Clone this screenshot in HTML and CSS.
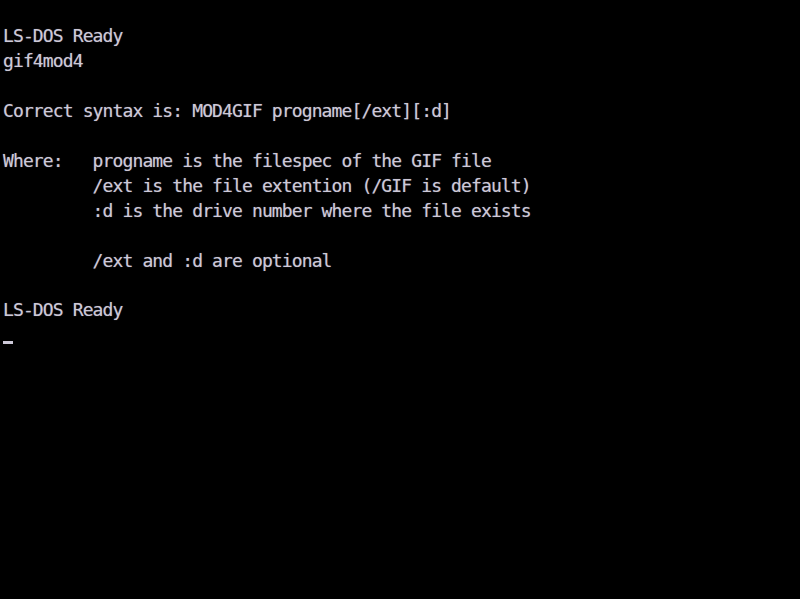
FILE: index.html
```html
<!DOCTYPE html>
<html>
<head>
<meta charset="utf-8">
<link rel="stylesheet" href="styles.css">
</head>
<body>
<main class="screen">
<pre class="term">LS-DOS Ready
gif4mod4

Correct syntax is: MOD4GIF progname[/ext][:d]

Where:   progname is the filespec of the GIF file
         /ext is the file extention (/GIF is default)
         :d is the drive number where the file exists

         /ext and :d are optional

LS-DOS Ready
<span class="cursor"></span></pre>
</main>
</body>
</html>
```

FILE: styles.css
```css
html, body {
  margin: 0;
  padding: 0;
  background: #000;
  height: 100%;
}
.screen {
  width: 800px;
  height: 599px;
  background: #000;
  overflow: hidden;
}
.term {
  margin: 0;
  padding: 24px 0 0 3px;
  font-family: "DejaVu Sans Mono", "Liberation Mono", monospace;
  font-size: 18px;
  letter-spacing: -0.88px;
  line-height: 24.95px;
  color: #cdc9d8;
  text-shadow: 0 0 1px rgba(200, 195, 220, 0.5);
  white-space: pre;
}
.cursor {
  display: inline-block;
  width: 10px;
  height: 3px;
  background: #cdc9d8;
  vertical-align: -3px;
}
```
